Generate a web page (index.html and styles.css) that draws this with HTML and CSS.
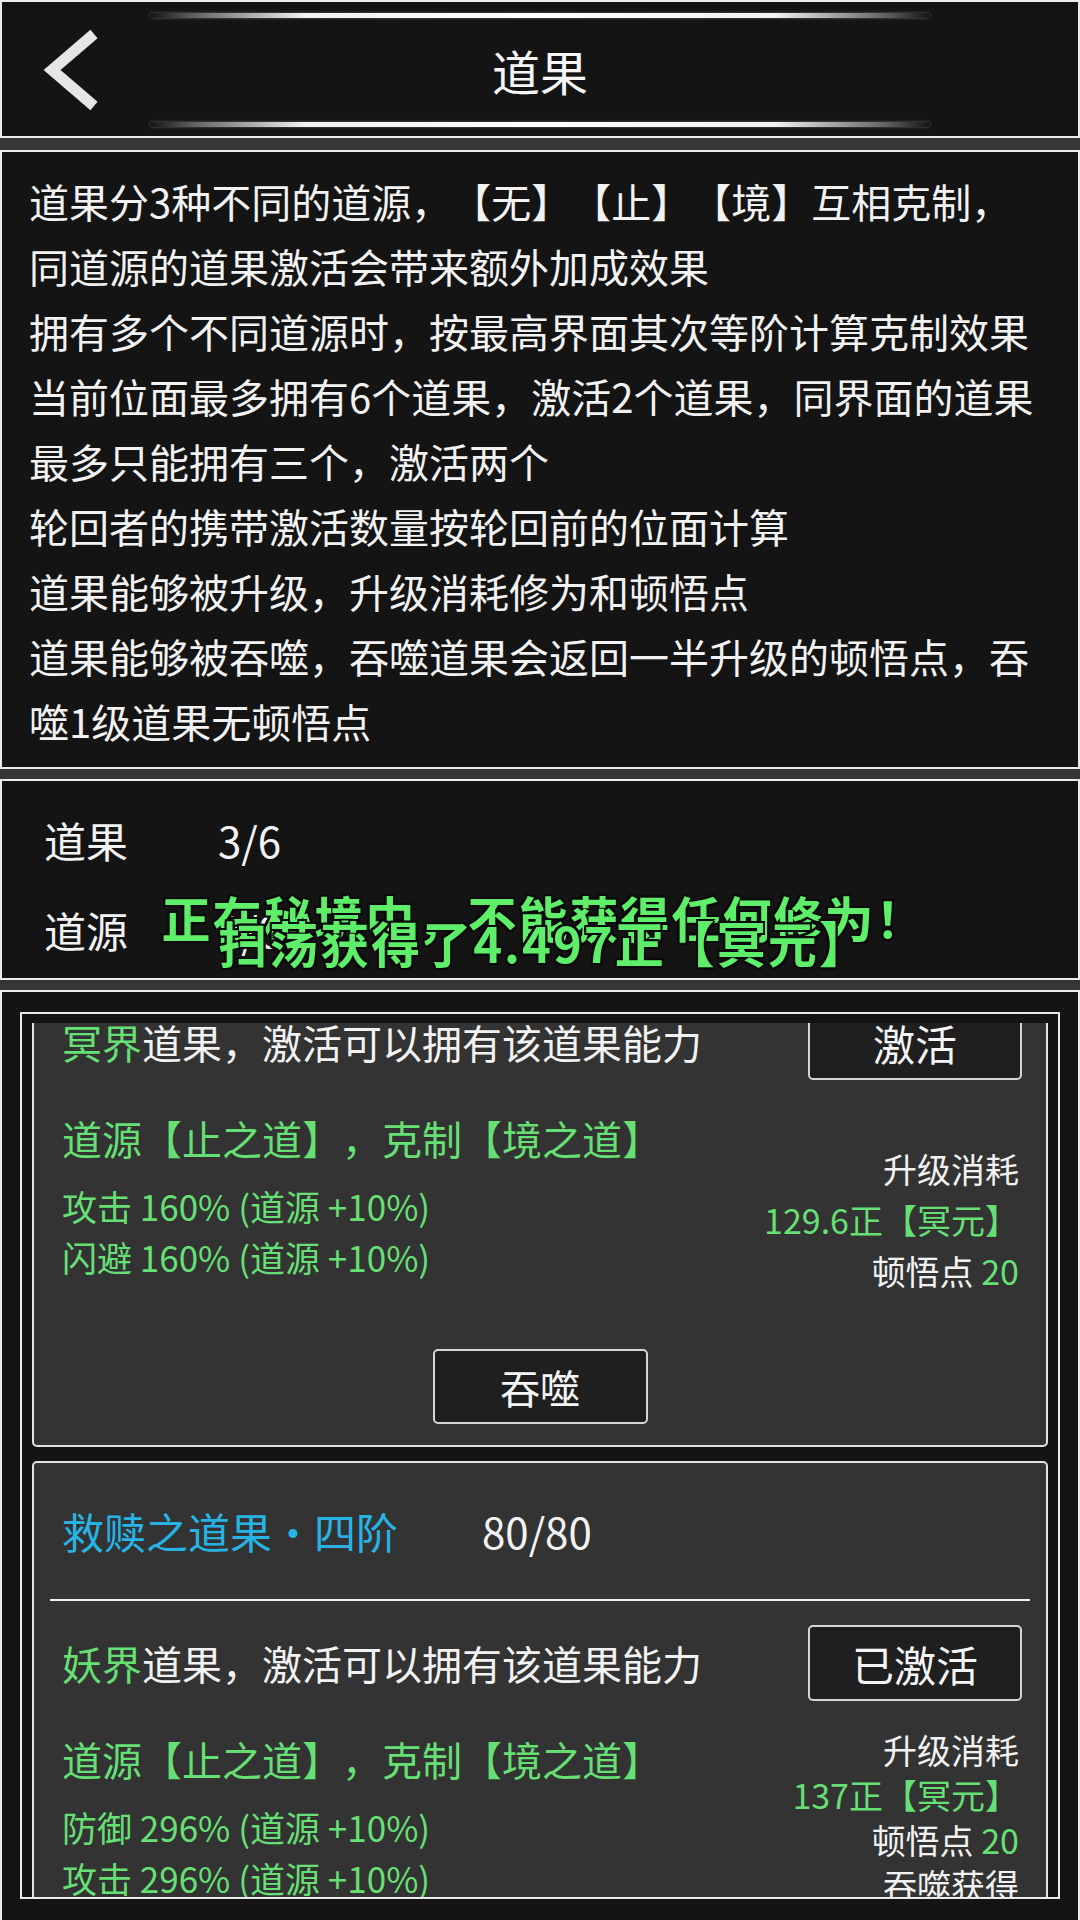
FILE: index.html
```html
<!DOCTYPE html>
<html lang="zh-CN">
<head>
<meta charset="utf-8">
<title>道果</title>
<link rel="stylesheet" href="styles.css">
</head>
<body>
<div class="screen">
  <header class="topbar">
    <div class="glow-line"></div>
    <div class="topbar-row">
      <div class="back">
        <svg viewBox="0 0 60 84" aria-hidden="true">
          <polyline points="52,6 10,42 52,78" fill="none" stroke="#e6e6e6" stroke-width="11" stroke-linejoin="miter" stroke-linecap="butt"/>
        </svg>
      </div>
      <h1 class="title">道果</h1>
      <div class="spacer"></div>
    </div>
    <div class="glow-line"></div>
  </header>

  <section class="panel desc">
    <p>道果分3种不同的道源，【无】【止】【境】互相克制，</p>
    <p>同道源的道果激活会带来额外加成效果</p>
    <p>拥有多个不同道源时，按最高界面其次等阶计算克制效果</p>
    <p>当前位面最多拥有6个道果，激活2个道果，同界面的道果</p>
    <p>最多只能拥有三个，激活两个</p>
    <p>轮回者的携带激活数量按轮回前的位面计算</p>
    <p>道果能够被升级，升级消耗修为和顿悟点</p>
    <p>道果能够被吞噬，吞噬道果会返回一半升级的顿悟点，吞</p>
    <p>噬1级道果无顿悟点</p>
  </section>

  <section class="panel stats">
    <div class="stat-label">道果</div><div class="stat-value">3/6</div>
    <div class="stat-label">道源</div><div class="stat-value">0/0</div>
  </section>

  <section class="panel list-panel">
    <div class="list-frame">
      <div class="list-viewport">
        <div class="list">
          <article class="card">
            <div class="card-head"><span class="card-name">幽冥之道果·四阶</span><span class="card-count">80/80</span></div>
            <div class="card-divider"></div>
            <div class="card-row">
              <span><span class="g">冥界</span>道果，激活可以拥有该道果能力</span>
              <button class="btn">激活</button>
            </div>
            <div class="card-body">
              <div class="attrs">
                <div class="src">道源【止之道】，克制【境之道】</div>
                <div class="attr">攻击 160% (道源 +10%)</div>
                <div class="attr">闪避 160% (道源 +10%)</div>
              </div>
              <div class="cost">
                <div>升级消耗</div>
                <div class="g">129.6正【冥元】</div>
                <div>顿悟点 <span class="g">20</span></div>
              </div>
            </div>
            <div class="devour"><button class="btn btn-devour">吞噬</button></div>
          </article>

          <article class="card">
            <div class="card-head"><span class="card-name">救赎之道果·四阶</span><span class="card-count">80/80</span></div>
            <div class="card-divider"></div>
            <div class="card-row">
              <span><span class="g">妖界</span>道果，激活可以拥有该道果能力</span>
              <button class="btn">已激活</button>
            </div>
            <div class="card-body">
              <div class="attrs">
                <div class="src">道源【止之道】，克制【境之道】</div>
                <div class="attr">防御 296% (道源 +10%)</div>
                <div class="attr">攻击 296% (道源 +10%)</div>
              </div>
              <div class="cost cost-tight">
                <div>升级消耗</div>
                <div class="g">137正【冥元】</div>
                <div>顿悟点 <span class="g">20</span></div>
                <div>吞噬获得</div>
                <div>顿悟点 <span class="g">0</span></div>
              </div>
            </div>
            <div class="devour"><button class="btn btn-devour">吞噬</button></div>
          </article>
        </div>
      </div>
    </div>
  </section>

  <div class="toast toast-a">正在秘境中，不能获得任何修为！</div>
  <div class="toast toast-b">扫荡获得了4.497正【冥元】</div>
</div>
</body>
</html>
```

FILE: styles.css
```css
* {
  box-sizing: border-box;
  margin: 0;
  padding: 0;
}

html,
body {
  width: 1080px;
  height: 1920px;
  overflow: hidden;
}

body {
  background: #363636;
  color: #f2f2f2;
  font-family: "Noto Sans CJK SC", "Noto Sans", sans-serif;
  text-spacing-trim: space-all;
}

.screen {
  position: relative;
  width: 1080px;
  height: 1920px;
  overflow: hidden;
  display: flex;
  flex-direction: column;
}

.topbar,
.panel {
  background: #141414;
  border: 2px solid #ececec;
  flex: none;
}

/* ---------- header ---------- */
.topbar {
  height: 138px;
  display: flex;
  flex-direction: column;
  padding: 11px 0 9px;
}

.glow-line {
  width: 780px;
  height: 5px;
  margin: 0 auto;
  border-radius: 3px;
  background: linear-gradient(90deg,
      rgba(255, 255, 255, 0) 0%,
      rgba(255, 255, 255, 0.35) 6%,
      rgba(255, 255, 255, 0.95) 20%,
      #ffffff 50%,
      rgba(255, 255, 255, 0.95) 80%,
      rgba(255, 255, 255, 0.35) 94%,
      rgba(255, 255, 255, 0) 100%);
  box-shadow: 0 0 3px rgba(255, 255, 255, 0.35);
}

.topbar-row {
  flex: 1;
  display: grid;
  grid-template-columns: 1fr auto 1fr;
  align-items: center;
}

.back {
  padding-left: 40px;
  display: flex;
  align-items: center;
}

.back svg {
  display: block;
  width: 60px;
  height: 84px;
}

.title {
  font-size: 48px;
  font-weight: 400;
  line-height: 1;
  color: #f5f5f5;
}

/* ---------- description ---------- */
.desc {
  margin-top: 12px;
  padding: 17px 20px 13px 27px;
  font-size: 40px;
  line-height: 65px;
  color: #f2f2f2;
}

.desc p {
  white-space: nowrap;
}

/* ---------- stats ---------- */
.stats {
  margin-top: 10px;
  padding: 13px 0 4px 42px;
  display: grid;
  grid-template-columns: 174px 1fr;
  grid-auto-rows: 90px;
  align-items: center;
  font-size: 42px;
  color: #f2f2f2;
}

/* ---------- list ---------- */
.list-panel {
  margin-top: 10px;
  height: 960px;
  padding: 20px 18px 0;
}

.list-frame {
  height: 887px;
  border: 2px solid #ececec;
  padding: 9px 10px 0;
}

.list-viewport {
  height: 100%;
  overflow: hidden;
}

.list {
  margin-top: -183px;
  display: flex;
  flex-direction: column;
  gap: 14px;
}

.card {
  background: #333333;
  border: 2px solid #e2e2e2;
  border-radius: 5px;
}

.card-head {
  height: 134px;
  display: flex;
  align-items: center;
  padding-left: 28px;
  font-size: 42px;
}

.card-name {
  color: #27b4e4;
}

.card-count {
  margin-left: 84px;
  color: #f2f2f2;
}

.card-divider {
  height: 2px;
  margin: 2px 16px 0;
  background: #f0f0f0;
}

.card-row {
  margin-top: 24px;
  height: 76px;
  display: flex;
  align-items: center;
  justify-content: space-between;
  padding: 0 24px 0 28px;
  font-size: 40px;
  color: #f2f2f2;
}

.g {
  color: #66df74;
}

.btn {
  width: 214px;
  height: 76px;
  display: flex;
  align-items: center;
  justify-content: center;
  background: #1f1f1f;
  border: 2px solid #d6d6d6;
  border-radius: 5px;
  color: #f5f5f5;
  font-family: inherit;
  font-size: 42px;
  font-weight: 400;
}

.card-body {
  margin-top: 26px;
  display: flex;
  justify-content: space-between;
  align-items: flex-start;
  padding: 0 27px 0 28px;
}

.src {
  font-size: 40px;
  line-height: 64px;
  margin-bottom: 10px;
  color: #66df74;
  white-space: nowrap;
}

.attr {
  font-size: 35px;
  line-height: 51px;
  color: #66df74;
  white-space: nowrap;
}

.cost {
  text-align: right;
  font-size: 34px;
  line-height: 51px;
  padding-top: 37px;
  color: #f2f2f2;
  white-space: nowrap;
}

.cost-tight {
  line-height: 45px;
  padding-top: 0;
}

.devour {
  display: flex;
  justify-content: center;
  margin-top: 53px;
  padding-bottom: 21px;
}

.btn-devour {
  width: 215px;
  height: 75px;
  font-size: 40px;
}

/* ---------- floating toasts ---------- */
.toast {
  position: absolute;
  left: 0;
  width: 1088px;
  text-align: center;
  font-size: 49px;
  letter-spacing: 2px;
  font-weight: 700;
  line-height: 60px;
  color: #5eee6a;
  white-space: nowrap;
  text-shadow:
    2px 0 0 #0b0b0b, -2px 0 0 #0b0b0b, 0 2px 0 #0b0b0b, 0 -2px 0 #0b0b0b,
    2px 2px 0 #0b0b0b, -2px -2px 0 #0b0b0b, 2px -2px 0 #0b0b0b, -2px 2px 0 #0b0b0b;
}

.toast-a {
  top: 887px;
}

.toast-b {
  top: 912px;
}
```
